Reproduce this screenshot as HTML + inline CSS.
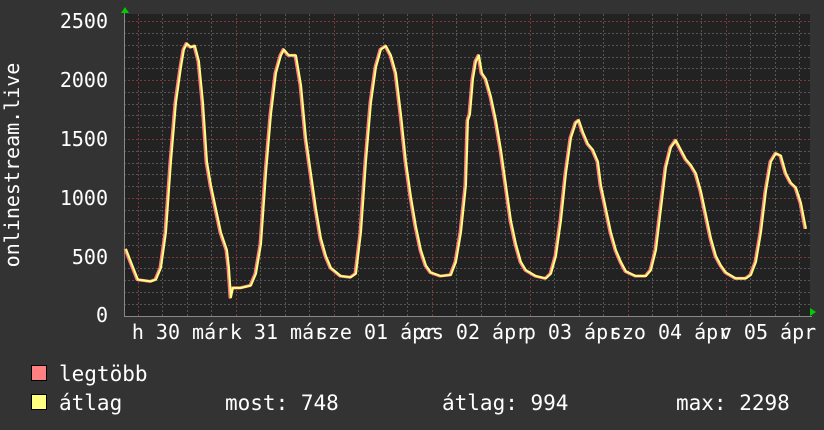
<!DOCTYPE html><html><head><style>body{margin:0;background:#333}svg{display:block}text{font-family:"DejaVu Sans Mono","Liberation Mono",monospace;fill:#fff}</style></head><body>
<svg width="824" height="430" viewBox="0 0 824 430">
<rect width="824" height="430" fill="#333"/>
<rect x="124" y="14" width="686" height="302" fill="#222"/>
<g stroke="#555" stroke-width="1" stroke-dasharray="2,2">
<path d="M124 33.5H810M124 45.5H810M124 57.5H810M124 68.5H810M124 92.5H810M124 104.5H810M124 115.5H810M124 127.5H810M124 151.5H810M124 163.5H810M124 174.5H810M124 186.5H810M124 210.5H810M124 221.5H810M124 233.5H810M124 245.5H810M124 268.5H810M124 280.5H810M124 292.5H810M124 304.5H810"/>
<path d="M162.5 14V316M187.5 14V316M211.5 14V316M260.5 14V316M285.5 14V316M309.5 14V316M358.5 14V316M383.5 14V316M407.5 14V316M456.5 14V316M481.5 14V316M505.5 14V316M554.5 14V316M579.5 14V316M603.5 14V316M652.5 14V316M677.5 14V316M701.5 14V316M750.5 14V316M775.5 14V316M799.5 14V316"/>
</g>
<g stroke="#7a3838" stroke-width="1" stroke-dasharray="2,2">
<path d="M124 21.5H810M124 80.5H810M124 139.5H810M124 198.5H810M124 257.5H810"/>
<path d="M138.5 14V316M236.5 14V316M334.5 14V316M432.5 14V316M530.5 14V316M628.5 14V316M726.5 14V316"/>
</g>
<path d="M124 316.5H812M124.5 316V12" stroke="#888" stroke-width="1"/>
<path d="M121 13L125 7L129 13Z" fill="#0c0"/>
<path d="M810 308L816 312L810 316Z" fill="#0c0"/>
<g transform="translate(0,315) scale(1,-0.118)">
<polyline fill="none" stroke="#ff8080" stroke-width="3" vector-effect="non-scaling-stroke" stroke-linejoin="round" points="125,560 130,450 137,300 150,285 155,300 160,400 165,700 170,1300 175,1800 180,2100 183,2250 186,2300 190,2270 194,2280 198,2150 202,1800 206,1300 210,1100 215,900 220,700 226,550 228,400 230,150 232,230 240,230 250,250 255,350 260,600 265,1200 270,1700 275,2050 280,2200 283,2250 288,2200 295,2200 300,1950 305,1500 310,1200 315,900 320,650 325,500 330,400 340,330 350,320 355,350 360,700 365,1300 370,1800 375,2100 380,2250 385,2280 390,2200 395,2050 400,1700 405,1300 410,1000 415,750 420,550 425,420 430,360 440,330 450,340 455,450 460,700 465,1100 467,1650 469,1700 472,2000 475,2150 478,2200 481,2050 485,2000 490,1850 495,1650 500,1400 505,1100 510,800 515,600 520,450 525,380 535,330 545,310 550,350 555,500 560,800 565,1200 570,1500 575,1630 578,1650 582,1550 587,1450 592,1400 597,1300 600,1100 605,900 610,700 615,550 620,450 625,370 635,330 645,330 650,380 655,550 660,900 665,1250 670,1420 675,1480 680,1400 685,1320 690,1270 695,1200 700,1050 705,850 710,650 715,500 720,420 725,360 735,310 745,310 750,340 755,450 760,700 765,1050 770,1300 775,1370 780,1350 785,1200 790,1120 795,1080 800,950 805,730"/>
<polyline transform="translate(1,0)" fill="none" stroke="#ffff80" stroke-width="2" vector-effect="non-scaling-stroke" stroke-linejoin="round" points="125,560 130,450 137,300 150,285 155,300 160,400 165,700 170,1300 175,1800 180,2100 183,2250 186,2300 190,2270 194,2280 198,2150 202,1800 206,1300 210,1100 215,900 220,700 226,550 228,400 230,150 232,230 240,230 250,250 255,350 260,600 265,1200 270,1700 275,2050 280,2200 283,2250 288,2200 295,2200 300,1950 305,1500 310,1200 315,900 320,650 325,500 330,400 340,330 350,320 355,350 360,700 365,1300 370,1800 375,2100 380,2250 385,2280 390,2200 395,2050 400,1700 405,1300 410,1000 415,750 420,550 425,420 430,360 440,330 450,340 455,450 460,700 465,1100 467,1650 469,1700 472,2000 475,2150 478,2200 481,2050 485,2000 490,1850 495,1650 500,1400 505,1100 510,800 515,600 520,450 525,380 535,330 545,310 550,350 555,500 560,800 565,1200 570,1500 575,1630 578,1650 582,1550 587,1450 592,1400 597,1300 600,1100 605,900 610,700 615,550 620,450 625,370 635,330 645,330 650,380 655,550 660,900 665,1250 670,1420 675,1480 680,1400 685,1320 690,1270 695,1200 700,1050 705,850 710,650 715,500 720,420 725,360 735,310 745,310 750,340 755,450 760,700 765,1050 770,1300 775,1370 780,1350 785,1200 790,1120 795,1080 800,950 805,730"/>
</g>
<g font-size="20" text-anchor="end">
<text x="108" y="28">2500</text><text x="108" y="87">2000</text><text x="108" y="146">1500</text><text x="108" y="205">1000</text><text x="108" y="264">500</text><text x="108" y="322">0</text>
</g>
<text font-size="20" transform="translate(19,165) rotate(-90)" text-anchor="middle">onlinestream.live</text>
<g font-size="20" text-anchor="middle">
<text x="180" y="339">h 30 már</text><text x="278" y="339">k 31 már</text><text x="376" y="339">sze 01 ápr</text><text x="474" y="339">cs 02 ápr</text><text x="572" y="339">p 03 ápr</text><text x="670" y="339">szo 04 ápr</text><text x="768" y="339">v 05 ápr</text>
</g>
<rect x="31.5" y="365.5" width="15" height="15" fill="#ff8080" stroke="#000"/>
<rect x="31.5" y="394.5" width="15" height="15" fill="#ffff80" stroke="#000"/>
<g font-size="21">
<text x="59" y="381">legtöbb</text><text x="59" y="410">átlag</text>
<text x="225" y="410">most: 748</text><text x="442" y="410">átlag: 994</text><text x="676" y="410">max: 2298</text>
</g>
</svg></body></html>
